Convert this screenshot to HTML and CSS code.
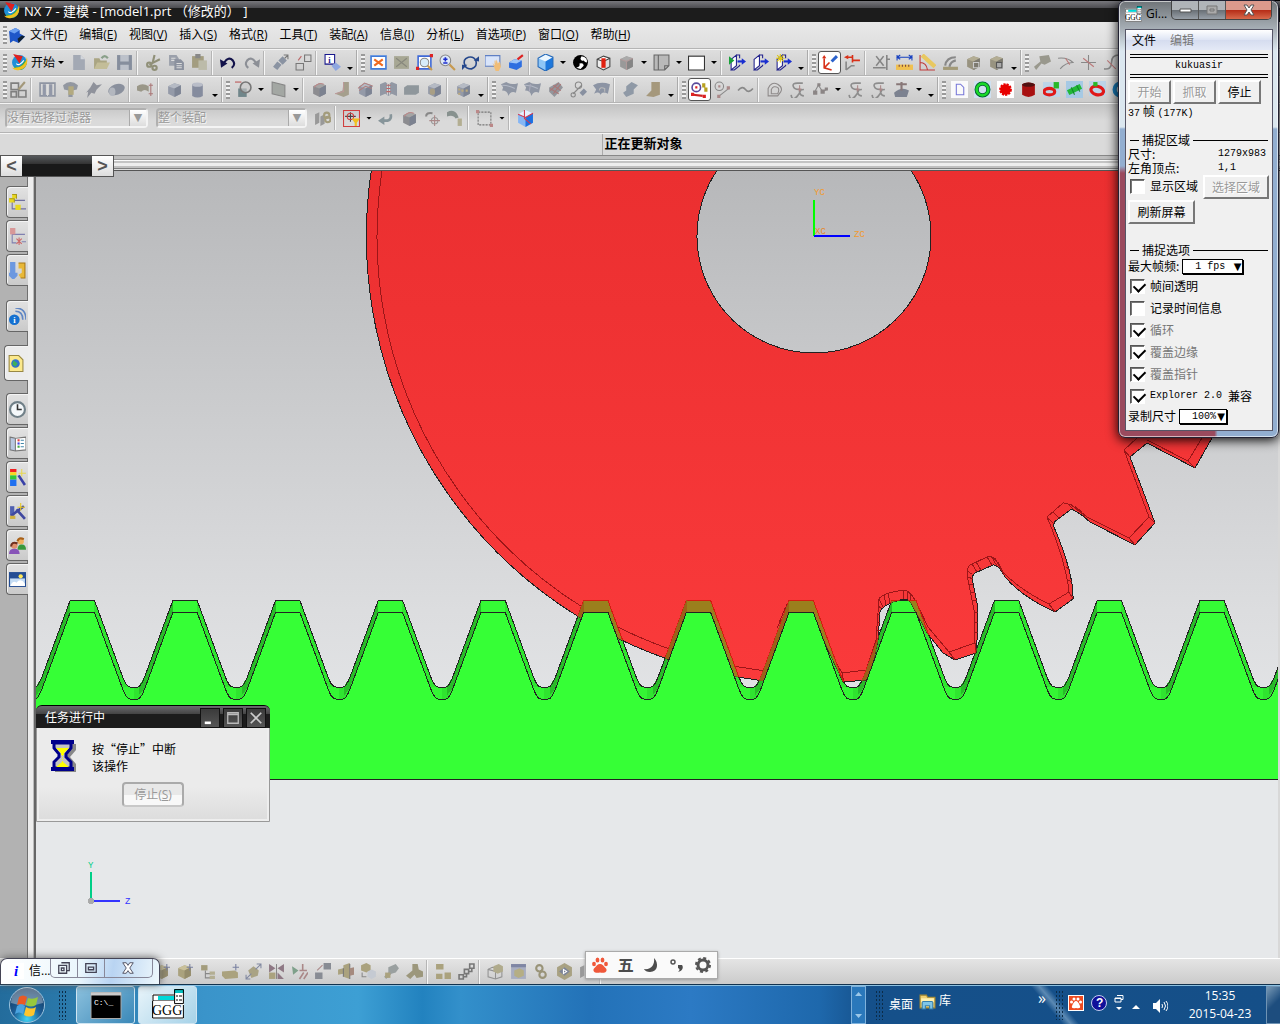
FILE: index.html
```html
<!DOCTYPE html>
<html lang="zh-CN">
<head>
    <meta charset="UTF-8">
    <meta name="viewport" content="width=device-width, initial-scale=1.0">
    <title>NX 7 - 建模</title>
    <link rel="stylesheet" href="styles.css">
</head>
<body>
    <header class="titlebar"><svg class="icon" data-icon="nx"></svg><h1>NX 7 - 建模 - [model1.prt （修改的） ]</h1></header>
    <nav class="menubar">
        <span class="grip"></span>
        <svg class="icon menu-icon" data-icon="part"></svg>
        <button>文件(<u>F</u>)</button>
        <button>编辑(<u>E</u>)</button>
        <button>视图(<u>V</u>)</button>
        <button>插入(<u>S</u>)</button>
        <button>格式(<u>R</u>)</button>
        <button>工具(<u>T</u>)</button>
        <button>装配(<u>A</u>)</button>
        <button>信息(<u>I</u>)</button>
        <button>分析(<u>L</u>)</button>
        <button>首选项(<u>P</u>)</button>
        <button>窗口(<u>O</u>)</button>
        <button>帮助(<u>H</u>)</button>
    </nav>
    <div class="toolbar">
        <span class="grip"></span>
        <button class="start-menu"><svg class="icon" data-icon="nx"></svg>开始</button>
        <div class="tools" data-items="v new open save | cut copy paste | undo redo | link swap | info V :: fit fitoff zoomwin zoom rotate pan persp | cube v contrast cubered cubegray v sheet v blank v | clip clip2 clipnew V :: *wcs csys | dimx ruler angle edge boxes boxes2 V :: hammer curve cross spline"></div>
    </div>
    <div class="toolbar">
        <span class="grip"></span>
        <div class="tools" data-items="sketch | extrude revolve sweep tube | offset | block cylinder V :: boolean v plane v | shell draft chamfer thread slab hole | pattern V :: surf surf2 mesh nodes blend | fold boot V :: *constrain arc wave | offcurve project points v spring spring stamp v V :: page ring gear drum gearpair shaft redring bluering"></div>
    </div>
    <div class="toolbar selection">
        <span class="combo filter"><select disabled aria-label="过滤器"><option>没有选择过滤器</option></select></span>
        <span class="combo scope"><select disabled aria-label="范围"><option>整个装配</option></select></span>
        <div class="tools" data-items="chain | snap v back shell target hook | marquee v | cubeline"></div>
    </div>
    <div class="status"><span class="cue"></span><strong class="message">正在更新对象</strong></div>
    <div class="strip">
        <div class="tab-scroll"><button aria-label="向左">&lt;</button><span></span><button aria-label="向右">&gt;</button></div>
    </div>

    <main class="work">
        <aside class="resource">
            <button aria-label="装配导航器"><svg class="icon" data-icon="tree"></svg></button>
            <button aria-label="约束导航器"><svg class="icon" data-icon="tree2"></svg></button>
            <button aria-label="重用库"><svg class="icon" data-icon="bolts"></svg></button>
            <button class="apart" aria-label="信息"><svg class="icon" data-icon="signal"></svg></button>
            <button class="apart current" aria-label="浏览器"><svg class="icon" data-icon="web"></svg></button>
            <button class="apart" aria-label="历史记录"><svg class="icon" data-icon="clock"></svg></button>
            <button aria-label="系统材料"><svg class="icon" data-icon="book"></svg></button>
            <button aria-label="可视化"><svg class="icon" data-icon="rainbow"></svg></button>
            <button aria-label="加工向导"><svg class="icon" data-icon="wand"></svg></button>
            <button aria-label="角色"><svg class="icon" data-icon="people"></svg></button>
            <button aria-label="系统场景"><svg class="icon" data-icon="scene"></svg></button>
        </aside>
        <section class="canvas">
            <svg class="model" viewBox="36 171 1242 787" preserveAspectRatio="xMinYMin slice">
                <defs>
                    <linearGradient id="red" gradientUnits="userSpaceOnUse" x1="0" y1="171" x2="0" y2="683">
                        <stop offset="0" stop-color="#eb2f30"/><stop offset="1" stop-color="#fa3a3b"/>
                    </linearGradient>
                    <linearGradient id="valley">
                        <stop offset="0" stop-color="#34f634"/><stop offset=".6" stop-color="#34f634"/><stop offset="1" stop-color="#1f991f"/>
                    </linearGradient>
                    <path id="gear-shape" clip-rule="evenodd" d="M373 160A447 447 0 0 0 732 676L763 681 790 650 820 632 843 682 867 680 873 663 878 640 880 612Q881 607 893 602L904 599Q910 599 913 607L922 623 927 633 943 653 955 660 976 653 977 640 977 603 973 583Q971 576 975 573L993 565Q998 564 1005 577 1022 597 1055 612L1073 599Q1074 574 1054 527 1053 522 1057 520L1070 510Q1074 508 1090 522L1135 545 1155 523 1140 483 1130 457 1147 443 1195 468 1212 438A447 447 0 0 0 1254 160H903A117 117 0 1 1 725 160Z"/>
                    <clipPath id="gear-clip"><use href="#gear-shape"/></clipPath>
                </defs>
                <g id="rack-back"></g>
                <use href="#gear-shape" fill="url(#red)" stroke="#222"/>
                <g class="gear-lines">
                    <path d="M382 171A437 437 0 0 0 733 666L765 671"/>
                    <path d="M812 605 829 650 842 673 866 670 876 640 879 599Q882 593 905 590 912 592 919 608L928 627 949 652 975 643 974 610 968 580Q966 567 970 565L989 556Q995 556 1003 572 1020 590 1049 604L1069 592Q1066 562 1047 517L1063 503Q1070 502 1087 517L1129 538 1149 517 1124 450 1137 438"/>
                    <path d="M1147 440 1188 461 1202 438M842 673 844 682M866 670 867 680M949 652 955 660M975 643 976 653M1049 604 1055 612M1069 592 1073 599M1129 538 1135 545M1149 517 1155 523M1188 461 1195 468M1124 450 1130 457M1047 517 1054 524M1053 512 1060 519M968 577 973 579M972 564 977 572M976 562 981 570M987 557 992 565M991 556 997 566M995 558 1001 570M998 562 1004 575M879 599 883 607M884 594 886 605M888 593 890 603M903 590 904 599M907 591 907 599M911 593 910 601M915 600 913 606M918 607 916 612M1067 503 1074 510M1071 504 1078 511M1075 506 1082 514M1079 509 1086 518M967 571 972 574M969 584 973 584M971 592 975 592M973 600 977 600M974 612 978 612M974 622 978 622M974 632 978 632M878 606 881 608M877 614 880 614M877 622 880 622M877 630 880 630M1066 567 1070 570M1068 580 1072 582M787 604 778 634M785 608 782 616M783 614 779 622M781 620 777 628"/>
                </g>
                <g id="rack-over" clip-path="url(#gear-clip)"></g>
                <path id="rack-front"/>
                <path d="M36 779.5H1278" stroke="#222"/>
                <g class="axis">
                    <path d="M814 236V200" stroke="#0f0"/><path d="M814 236H850" stroke="#00f"/>
                    <text x="814" y="195" fill="#f29a2e">YC</text><text x="854" y="237" fill="#f29a2e">ZC</text><text x="815" y="234" fill="#e5892c">XC</text>
                    <path d="M91 900V872" stroke="#00cf87"/><path d="M91 901H120" stroke="#3434ff"/><circle cx="91" cy="901" r="3" fill="#aaa"/>
                    <text x="88" y="868" fill="#00cf87">Y</text><text x="125" y="904" fill="#3434ff">Z</text>
                </g>
            </svg>
            <section class="task-dialog">
                <header><h2>任务进行中</h2><button aria-label="最小化"><svg viewBox="0 0 16 16"><path d="M2 12h7v3H2z" fill="#fff"/></svg></button><button aria-label="最大化"><svg viewBox="0 0 16 16"><path d="M2 2h12v12H2zM2 4h12" fill="none" stroke="#bbb" stroke-width="1.500"/></svg></button><button aria-label="关闭"><svg viewBox="0 0 16 16"><path d="M2 2l12 12M14 2L2 14" stroke="#ccc" stroke-width="2"/></svg></button></header>
                <div class="task-body">
                    <svg class="hourglass" viewBox="0 0 26 32"><path d="M4 4h21v6l-6 7 6 7v8H4v-4h2l6-11-6-7z" fill="#888"/><path d="M3 3h17v5l-5 6v3l5 5v6H3v-6l5-5v-3L3 8z" fill="#c4c4c4" stroke="#00008b" stroke-width="3"/><path d="M0 0h23v4H0zM0 27h23v4H0z" fill="#00008b"/><path d="M5 8h13l-5 5v2h-3v-2zM5 27l6-5h1l6 5z" fill="#ff0"/><path d="M11.500 15v8" stroke="#ff0" stroke-dasharray="1 1"/></svg>
                    <p>按“停止”中断<br>该操作</p>
                </div>
                <button class="stop" disabled>停止(<u>S</u>)</button>
            </section>
        </section>
    </main>

    <div class="toolbar assembly">
        <div class="tools" data-items="add addcomp addtree addslab move mirror constraints arrange assy replace wrench brick | parts steps | cubes window links diamond chain | block"></div>
    </div>

    <section class="info-window">
        <span class="info-mark">i</span><span class="info-title">信...</span>
        <div class="info-buttons">
            <button aria-label="还原"><svg viewBox="0 0 16 16"><path d="M5 2h9v9h-3M2 5h9v9H2zM5 8h3v3H5z" fill="none" stroke="#445" stroke-width="1.500"/></svg></button>
            <button aria-label="最大化"><svg viewBox="0 0 16 16"><path d="M2 3h12v10H2zM5 7h6v3H5z" fill="none" stroke="#445" stroke-width="1.500"/></svg></button>
            <button class="wide" aria-label="关闭"><svg viewBox="0 0 16 16"><path d="M2 2h4l2 3 2-3h4l-4 6 4 6h-4l-2-3-2 3H2l4-6z" fill="#fff" stroke="#445"/></svg></button>
        </div>
    </section>

    <section class="ime">
        <svg viewBox="0 0 16 16"><g fill="#f0583a"><ellipse cx="2" cy="7" rx="1.900" ry="2.300"/><ellipse cx="5.500" cy="3" rx="1.900" ry="2.500"/><ellipse cx="10.500" cy="3" rx="1.900" ry="2.500"/><ellipse cx="14" cy="7" rx="1.900" ry="2.300"/><path d="M8 7c2.500 0 3.500 2 6 4.500 2 3-1.500 5-6 4-4.500 1-8-1-6-4 2.500-2.500 3.500-4.500 6-4.500z"/></g></svg>
        <b>五</b>
        <svg viewBox="0 0 16 16"><path d="M11 1c5 5 4 14-4 14-3 0-5-1-6-3 7 1 11-4 10-11z" fill="#4c4c4c"/></svg>
        <svg viewBox="0 0 16 16"><circle cx="4" cy="5" r="2" fill="none" stroke="#555" stroke-width="1.500"/><path d="M9 8h4c2 3 0 6-4 7 2-2 2-3 0-4z" fill="#4c4c4c"/></svg>
        <svg viewBox="0 0 16 16"><circle cx="8" cy="8" r="5" fill="none" stroke="#555" stroke-width="3"/><circle cx="8" cy="8" r="7" fill="none" stroke="#555" stroke-width="2" stroke-dasharray="3 2.500"/></svg>
    </section>

    <section class="gif-window">
        <header>
            <svg class="gif-logo" data-icon="gif"></svg><h2>Gi...</h2>
            <div class="win-buttons"><button aria-label="最小化"><svg viewBox="0 0 14 14"><path d="M2 6h11v3H2z" fill="#fff" stroke="#555"/></svg></button><button aria-label="最大化"><svg viewBox="0 0 14 14"><path d="M2 3h10v8H2zM5 6h4v2H5z" fill="#aaa" stroke="#777"/></svg></button><button class="close" aria-label="关闭"><svg viewBox="0 0 14 14"><path d="M2 2h3l2 3 2-3h3L9 7l3 5H9L7 9l-2 3H2l3-5z" fill="#fff" stroke="#555"/></svg></button></div>
        </header>
        <div class="gif-client">
            <nav><button>文件</button><button disabled>编辑</button></nav>
            <div class="gif-name mono">kukuasir</div>
            <div class="gif-buttons"><button disabled>开始</button><button disabled>抓取</button><button>停止</button></div>
            <p class="frames"><span class="mono">37</span> 帧 <span class="mono">(177K)</span></p>
            <h3>捕捉区域</h3>
            <dl>
                <dt>尺寸:</dt><dd class="mono">1279x983</dd>
                <dt>左角顶点:</dt><dd class="mono">1,1</dd>
            </dl>
            <div class="area"><label class="check"><input type="checkbox">显示区域</label><button disabled>选择区域</button></div>
            <button class="refresh">刷新屏幕</button>
            <h3>捕捉选项</h3>
            <label class="pick">最大帧频: <span class="drop rate"><select><option>1 fps</option></select></span></label>
            <label class="check"><input type="checkbox" checked>帧间透明</label>
            <label class="check"><input type="checkbox">记录时间信息</label>
            <label class="check off"><input type="checkbox" checked disabled>循环</label>
            <label class="check off"><input type="checkbox" checked disabled>覆盖边缘</label>
            <label class="check off"><input type="checkbox" checked disabled>覆盖指针</label>
            <label class="check"><input type="checkbox" checked><span class="mono">Explorer 2.0&nbsp;</span>兼容</label>
            <label class="pick">录制尺寸<span class="drop size"><select><option>100%</option></select></span></label>
        </div>
    </section>

    <footer class="taskbar">
        <button class="orb" aria-label="开始"><svg viewBox="0 0 38 38">
            <defs><radialGradient id="orb" cx=".5" cy=".9" r=".8"><stop offset="0" stop-color="#3fd4f4"/><stop offset=".5" stop-color="#1d5f98"/><stop offset="1" stop-color="#123a63"/></radialGradient></defs>
            <circle cx="19" cy="19" r="17.500" fill="url(#orb)" stroke="#9cc4de"/><path d="M3 17a16 16 0 0 1 32 0q-16 5-32 0z" fill="#fff" opacity=".35"/>
            <path d="M11 11q4-3 8 0l-2 8q-4-2-8 0z" fill="#ea5a24"/><path d="M20 12q5 2 10-1l-2 8q-5 3-10 0z" fill="#97c83d"/><path d="M9 20q4-3 8 0l-2 8q-4-3-8 0z" fill="#4aa3e0"/><path d="M18 21q5 3 10 0l-2 8q-5 3-10 0z" fill="#fcc52c"/>
        </svg></button>
        <span class="dots"></span>
        <button class="task" aria-label="命令提示符"><svg viewBox="0 0 32 28"><path d="M1 1h30v26H1z" fill="#000" stroke="#aaa"/><path d="M1 1h30v3H1z" fill="#ccc"/><text x="4" y="13">C:\_</text></svg></button>
        <button class="task active" aria-label="GifGifGif"><svg data-icon="gif"></svg></button>
        <span class="wall"></span>
        <span class="scroller"><i class="up"></i><i class="down"></i></span>
        <span class="dots"></span>
        <button class="desk">桌面</button>
        <button class="lib"><svg viewBox="0 0 16 16"><path d="M1 2h6l1 2h7v10H1z" fill="#f0d070" stroke="#a88a30"/><path d="M2 5h12v4H2z" fill="#fff1b0"/><path d="M3 15V9q0-1 1-1h8q1 0 1 1v6h-3v-3H6v3z" fill="#7fc6e8" stroke="#357fae"/></svg>库</button>
        <span class="more">»</span>
        <span class="dots"></span>
        <div class="tray">
            <svg viewBox="0 0 16 16"><path d="M0 0h16v16H0z" fill="#fff"/><path d="M1 1h14v14H1z" fill="#ee4c22"/><g fill="#fff"><circle cx="3.500" cy="7" r="1.500"/><circle cx="6" cy="4" r="1.500"/><circle cx="10" cy="4" r="1.500"/><circle cx="12.500" cy="7" r="1.500"/><path d="M8 6q2 0 4 5 1 3-4 2-5 1-4-2 2-5 4-5z"/></g></svg>
            <svg viewBox="0 0 16 16"><circle cx="8" cy="8" r="7.500" fill="#10109a" stroke="#c5cdf0"/><text x="5" y="12" fill="#fff">?</text></svg>
            <svg class="thin" viewBox="0 0 10 18"><path d="M3 1.500h6v4H7M1 4h6v4H1zM1 4.500h6" fill="none" stroke="#fff"/><path d="M2 13h6l-3 3z" fill="#fff"/></svg>
            <svg class="thin low" viewBox="0 0 10 18"><path d="M1 12h8l-4-4z" fill="#fff"/></svg>
            <svg class="low" viewBox="0 0 16 16"><path d="M1 5h3l4-4v14l-4-4H1z" fill="#fff"/><path d="M10 6q1 2 0 4M12 4q3 4 0 8M14 3q4 5 0 10" fill="none" stroke="#fff"/></svg>
        </div>
        <time>15:35<br>2015-04-23</time>
        <button class="show-desktop" aria-label="显示桌面"></button>
    </footer>
    <script src="script.js"></script>
</body>
</html>
```
FILE: styles.css
```css
*{
    box-sizing: border-box;
    margin: 0;
    padding: 0;
}
body{
    display: flex;
    flex-direction: column;
    position: relative;
    min-height: 100vh;
    overflow: hidden;
    background: #d8d8d8;
    color: #000;
    font: 12px/16px "Open Sans", "Noto Sans CJK SC", sans-serif;
}
button, select, input{
    font: inherit;
    color: inherit;
    border: 0;
    background: none;
}
svg{
    display: block;
    flex: none;
}
.icon{
    width: 17px;
    height: 17px;
}

/* title and menu */
.titlebar{
    display: flex;
    align-items: center;
    gap: 4px;
    height: 22px;
    padding: 0 0 2px 3px;
    border-top: 1px solid #000;
    background: linear-gradient(#77777c, #4c4c50 7px, #1c1c1c 7px);
    color: #fff;
}
.titlebar h1{
    font-size: 13px;
    font-weight: normal;
}
.menubar{
    display: flex;
    align-items: center;
    gap: 12px;
    height: 27px;
    padding-left: 3px;
    background: linear-gradient(#e9e9e9, #dedede);
    border-bottom: 1px solid #b4b4b4;
}
.menu-icon{
    margin: 0 -7px 0 -11px;
}
.grip{
    flex: none;
    width: 4px;
    height: 18px;
    background: repeating-linear-gradient(#999 0 2px, #f2f2f2 2px 4px);
}

/* toolbars */
.toolbar{
    display: flex;
    align-items: center;
    height: 27px;
    padding-left: 3px;
    background: linear-gradient(#dedede, #cbcbcb);
    border-top: 1px solid #f4f4f4;
    border-bottom: 1px solid #b4b4b4;
    overflow: hidden;
}
.start-menu{
    display: flex;
    align-items: center;
    gap: 3px;
    margin-left: 4px;
    white-space: nowrap;
}
.tools{
    display: flex;
    align-items: center;
    height: 100%;
}
.tool{
    display: flex;
    align-items: center;
    justify-content: center;
    width: 23px;
    height: 23px;
    flex: none;
}
.pressed{
    border: 1px solid #555;
    border-radius: 3px;
    background: #fff;
}
.arrow{
    flex: none;
    width: 12px;
    height: 3px;
    background: #000;
    clip-path: polygon(25% 0, 75% 0, 50% 100%);
}
.arrow.low{
    align-self: flex-end;
    margin-bottom: 5px;
}
.sep{
    flex: none;
    width: 6px;
    height: 24px;
    border-left: 1px solid #b5b5b5;
    background: linear-gradient(#f6f6f6, #f6f6f6) 0 0 / 1px 100% no-repeat;
}
.group-end{
    flex: none;
    width: 5px;
    height: 100%;
    border-left: 1px solid #aaa;
    box-shadow: inset 1px 0 #f4f4f4;
}
.tools .grip{
    margin-right: 2px;
}
.selection{
    height: 30px;
    padding-left: 5px;
    background: linear-gradient(#c2c2c2, #dadada 60%);
}
.combo{
    position: relative;
    margin-right: 8px;
    border: 2px solid #b0b0b0;
    border-right-color: #f4f4f4;
    border-bottom-color: #f4f4f4;
    border-radius: 4px;
}
.combo select{
    display: block;
    width: 100%;
    height: 16px;
    line-height: 16px;
    appearance: none;
    color: #999;
    text-shadow: 1px 1px #f4f4f4;
    opacity: 1;
}
.combo::after{
    content: "▼";
    position: absolute;
    right: 0;
    top: 0;
    width: 16px;
    height: 16px;
    border-left: 1px solid #aaa;
    background: linear-gradient(#fff, #ddd);
    color: #999;
    font: 11px/16px "DejaVu Sans", sans-serif;
    text-align: center;
}
.filter{
    width: 143px;
}
.scope{
    width: 151px;
    margin-right: 4px;
}
.status{
    display: grid;
    grid-template-columns: 47% 1fr;
    align-items: center;
    height: 22px;
    border-top: 1px solid #f6f6f6;
    background: #dadada;
}
.message{
    padding: 0 0 2px 2px;
    border-left: 1px solid #aaa;
    font-size: 13px;
    line-height: 19px;
}
.strip{
    position: relative;
    height: 16px;
    background: linear-gradient(#888 1px, #bebebe 1px 4px, #999 4px 5px, #fafafa 5px 6px, #c4c4c4 6px 8px, #eee 8px 11px, #c0c0c0 11px 13px, #808080 13px 14px, #ddd 14px 15px, #555 15px);
}
.tab-scroll{
    position: absolute;
    z-index: 1;
    left: 0;
    top: 0;
    display: flex;
    width: 114px;
    height: 22px;
    border: 1px solid #555;
    background: linear-gradient(#55585b, #333 8px, #191919 8px);
}
.tab-scroll button{
    width: 21px;
    background: linear-gradient(#fff, #ddd);
    color: #555;
    font: bold 18px/18px "Liberation Sans", sans-serif;
}
.tab-scroll span{
    flex: 1;
}

/* working area */
.work{
    display: flex;
    flex: 1;
    min-height: 787px;
}
.resource{
    display: flex;
    flex-direction: column;
    align-items: flex-end;
    gap: 2px;
    width: 36px;
    padding: 15px 8px 0 0;
    background: linear-gradient(90deg, #b2b2b2 27px, #707070 27px 28px, #ededed 28px 33px, #bbb 33px 34px, #666 34px);
}
.resource button{
    width: 22px;
    height: 32px;
    padding-left: 2px;
    border: 1px solid #666;
    border-right: 0;
    border-radius: 4px 0 0 4px;
    background: linear-gradient(#e2e2e2, #cacaca);
    box-shadow: inset 1px 1px #f4f4f4;
}
.resource .apart{
    margin-top: 12px;
}
.resource .current{
    width: 24px;
    height: 36px;
    margin-top: 11px;
    background: #ececec;
}
.resource .current + .apart{
    margin-top: 10px;
}
.canvas{
    position: relative;
    flex: 1;
    min-width: 0;
    margin-right: 2px;
    overflow: hidden;
    background: linear-gradient(#b7b8ba, #dcdddf 440px, #e6e8ea 600px);
}
.model{
    width: 100%;
    height: 100%;
    shape-rendering: crispEdges;
}
.gear-lines{
    fill: none;
    stroke: #9c1618;
}
.axis path{
    stroke-width: 2;
}
.axis text{
    font: 9px "Liberation Mono", monospace;
}

/* task dialog */
.task-dialog{
    position: absolute;
    left: 0;
    top: 534px;
    width: 234px;
    border: 1px solid #999;
    border-radius: 6px 6px 0 0;
    background: linear-gradient(#ebebeb 70%, #dcdcdc);
    box-shadow: inset 0 0 0 2px #eee;
}
.task-dialog header{
    display: flex;
    align-items: center;
    gap: 3px;
    height: 23px;
    margin: -1px -1px 0;
    padding: 1px 4px 0 9px;
    border-radius: 6px 6px 0 0;
    border-top: 1px solid #000;
    background: linear-gradient(#6a6a6e, #444 8px, #1c1c1c 8px);
    color: #fff;
}
.task-dialog h2{
    flex: 1;
    font-size: 12px;
    font-weight: normal;
}
.task-dialog header button{
    width: 20px;
    padding: 2px;
    border: 1px solid #111;
    background: linear-gradient(#3a3a3a, #555);
}
.task-dialog header svg{
    width: 14px;
    height: 14px;
}
.task-body{
    display: flex;
    gap: 15px;
    padding: 12px 14px 0;
    font-family: "Noto Sans CJK SC", sans-serif;
    line-height: 17px;
}
.hourglass{
    width: 26px;
    height: 32px;
}
.stop{
    display: block;
    width: 62px;
    height: 25px;
    margin: 8px auto 14px;
    border: 2px solid #aaa;
    border-bottom-color: #c8c8c8;
    border-radius: 4px;
    background: linear-gradient(#e8e8e8 50%, #f8f8f8 50%);
    color: #999;
}

/* bottom bars */
.assembly{
    height: 26px;
    padding-left: 150px;
    border-top: 1px solid #fff;
    background: linear-gradient(#e4e4e4, #cbcbcb);
    border-bottom: 0;
}
.info-window{
    position: absolute;
    left: 0;
    bottom: 41px;
    display: flex;
    align-items: flex-start;
    width: 160px;
    height: 26px;
    padding-left: 7px;
    border: 1px solid #445;
    border-bottom: 0;
    border-radius: 7px 7px 0 0;
    background: linear-gradient(100deg, #fff, #eaf6fc 50%, #b9d4f2 70%, #eef8fc);
    box-shadow: 0 0 8px #555;
}
.info-mark{
    width: 16px;
    height: 16px;
    margin: 4px 5px 0 0;
    background: #fff;
    color: #00f;
    font: italic bold 15px/16px "Liberation Serif", serif;
    text-align: center;
}
.info-title{
    padding-top: 4px;
}
.info-buttons{
    display: flex;
    height: 19px;
    border: 1px solid #889;
    border-top: 0;
    border-radius: 0 0 5px 5px;
}
.info-buttons button{
    width: 27px;
    padding: 1px 6px;
    border-right: 1px solid #889;
}
.info-buttons .wide{
    width: 47px;
    padding: 1px 16px;
    border: 0;
}
.info-buttons svg{
    width: 14px;
    height: 14px;
}
.ime{
    position: absolute;
    left: 585px;
    bottom: 46px;
    display: flex;
    align-items: center;
    justify-content: space-between;
    width: 133px;
    height: 28px;
    padding: 0 6px;
    border: 1px solid #aaa;
    background: #fafafa;
    box-shadow: 0 1px 3px #999;
}
.ime svg{
    width: 16px;
    height: 16px;
}
.ime b{
    color: #4c4c4c;
    font-size: 16px;
}

/* recorder window */
.gif-window{
    position: absolute;
    right: 1px;
    top: 0;
    width: 161px;
    height: 438px;
    padding: 0 6px 6px;
    border: 1px solid #223;
    border-radius: 7px;
    background: linear-gradient(#6f7478, #a7afb6 28px, #dbe7ef 50px 126px, transparent 128px), linear-gradient(90deg, transparent 60%, #92aed0 62%), linear-gradient(#92aed0 165px, #9a4a5e 172px);
    box-shadow: inset 0 0 0 1px #ffffff99, 0 2px 12px #000;
}
.gif-window header{
    display: flex;
    height: 28px;
}
.gif-logo{
    width: 17px;
    height: 17px;
    margin: 5px 4px 0 0;
}
.gif-window h2{
    width: 22px;
    padding-top: 5px;
    font-size: 12px;
    font-weight: normal;
    white-space: nowrap;
}
.win-buttons{
    display: flex;
    height: 19px;
    margin-left: 3px;
    border: 1px solid #444;
    border-top: 0;
    border-radius: 0 0 5px 5px;
    background: linear-gradient(#b0b4b8 50%, #686e74 50%, #98a0a8);
    overflow: hidden;
}
.win-buttons button{
    width: 27px;
    padding: 2px 6px;
    border-right: 1px solid #555;
}
.win-buttons .close{
    width: 47px;
    padding: 2px 16px;
    border: 0;
    background: linear-gradient(#dc9a8c 50%, #b52b16 50%, #d86a4c);
}
.win-buttons svg{
    width: 14px;
    height: 14px;
}
.gif-client{
    display: flex;
    flex-direction: column;
    align-items: flex-start;
    width: 148px;
    height: 402px;
    padding: 0 3px 0 2px;
    border: 1px solid #556;
    background: #f0f0f0;
    font: 12px/14px "Noto Sans CJK SC", sans-serif;
}
.gif-client > *{
    flex: none;
}
.gif-client nav{
    display: flex;
    gap: 14px;
    align-self: stretch;
    height: 20px;
    margin: 0 -3px 4px -2px;
    padding-left: 6px;
    background: linear-gradient(#fff, #dde4f4 50%, #d5dcef 50%, #e4e9f6);
}
.gif-client nav button:disabled{
    color: #777;
}
.mono{
    font-family: "Liberation Mono", "Noto Sans CJK SC", monospace;
    font-size: 10px;
}
.gif-name{
    align-self: stretch;
    height: 24px;
    margin: 0 1px 2px 2px;
    border: solid #000;
    border-width: 4px 0;
    border-style: double;
    line-height: 16px;
    text-align: center;
}
.gif-buttons{
    display: flex;
    gap: 2px;
}
.gif-client > button, .gif-buttons button, .area button{
    height: 24px;
    border: 2px solid #fff;
    border-right-color: #777;
    border-bottom-color: #777;
    background: #f0f0f0;
    white-space: nowrap;
}
.gif-buttons button{
    width: 43px;
}
.gif-client > button:disabled, .gif-buttons button:disabled, .area button:disabled{
    color: #999;
    text-shadow: 1px 1px #fff;
}
.frames{
    height: 14px;
    margin-bottom: 15px;
}
.gif-client h3{
    display: flex;
    align-items: center;
    align-self: stretch;
    gap: 3px;
    margin: 0 1px 0 2px;
    font-size: 12px;
    font-weight: normal;
    line-height: 14px;
}
.gif-client h3::before{
    content: "";
    width: 9px;
    border-top: 1px solid #000;
}
.gif-client h3::after{
    content: "";
    flex: 1;
    border-top: 1px solid #000;
}
.gif-client dl{
    display: grid;
    grid-template-columns: 90px 1fr;
    grid-auto-rows: 14px;
    align-items: center;
}
.area{
    display: flex;
    justify-content: space-between;
    align-self: stretch;
}
.area button{
    width: 66px;
}
.check{
    display: flex;
    align-items: center;
    height: 22px;
    padding-left: 2px;
    white-space: nowrap;
}
.check.off{
    color: #777;
}
.check input{
    position: relative;
    width: 15px;
    height: 15px;
    margin-right: 5px;
    appearance: none;
    border: 1px solid #555;
    border-right-color: #fff;
    border-bottom-color: #fff;
    background: #fff;
    box-shadow: inset 1px 1px #777;
}
.check input:checked::after{
    content: "";
    position: absolute;
    left: 3px;
    top: 2px;
    width: 9px;
    height: 6px;
    border: solid #000;
    border-width: 0 0 2px 2px;
    transform: rotate(-45deg);
}
.refresh{
    width: 67px;
    margin: 1px 0 19px;
}
.pick{
    display: flex;
    align-items: center;
    gap: 3px;
    height: 18px;
}
.drop{
    position: relative;
    border: 1px solid #000;
    background: #fff;
    box-shadow: 1px 1px #000;
}
.drop select{
    display: block;
    width: 100%;
    height: 13px;
    padding-left: 12px;
    appearance: none;
    font: 10px/13px "Liberation Mono", monospace;
}
.drop::after{
    content: "▼";
    position: absolute;
    right: 1px;
    top: 0;
    font: 10px/13px "DejaVu Sans", sans-serif;
}
.rate{
    width: 61px;
}
.size{
    width: 48px;
}

/* taskbar */
.taskbar{
    display: flex;
    align-items: center;
    height: 41px;
    padding-left: 8px;
    border-top: 1px solid #12324e;
    background: linear-gradient(50deg, transparent 44%, #7fa6c8aa 50%, transparent 56%) 1000px 0 / 110px 100% no-repeat, linear-gradient(90deg, #236c9c, #3a94ca 16%, #3d9fd4 28%, #2282bf 33%, #3390cb 36%, #2372b8 46%, #2c7ac4 54%, #1e68ac 64%, #15508a 68%, #154f88);
    box-shadow: inset 0 1px #8cc0e0;
    color: #fff;
}
.orb{
    width: 38px;
    height: 38px;
}
.dots{
    width: 9px;
    height: 30px;
    background: radial-gradient(#0c2c48 40%, transparent 50%) 0 0 / 3px 4px;
}
.orb + .dots{
    margin: 0 9px 0 12px;
}
.task{
    display: flex;
    align-items: center;
    justify-content: center;
    width: 59px;
    height: 38px;
    margin-right: 3px;
    border: 1px solid #cfe5f2;
    border-radius: 3px;
    background: linear-gradient(135deg, #8bc0dd, #3a88b8);
}
.task.active{
    background: linear-gradient(135deg, #e8f4fa, #a6d2e8);
}
.task svg{
    width: 32px;
    height: 29px;
}
.task.active svg{
    height: 32px;
}
.task text{
    fill: #fff;
    font: 8px "Liberation Mono", monospace;
}
svg .gif-text{
    fill: #000;
    font: 7px "Liberation Serif", serif;
}
svg .info-text{
    font: bold 8px "Liberation Serif", serif;
}
.wall{
    flex: 1;
}
.scroller{
    display: flex;
    flex-direction: column;
    justify-content: space-between;
    align-items: center;
    width: 15px;
    height: 38px;
    margin-right: 9px;
    padding: 5px 0;
    border: 1px solid #7fb2dc;
    background: #2a78bb;
}
.scroller i{
    width: 7px;
    height: 4px;
    background: #9cc8e8;
}
.up{
    clip-path: polygon(50% 0, 100% 100%, 0 100%);
}
.down{
    clip-path: polygon(0 0, 100% 0, 50% 100%);
}
.desk{
    margin: 0 6px 0 5px;
}
.lib{
    display: flex;
    align-items: center;
    gap: 3px;
    margin-bottom: 8px;
}
.lib svg{
    width: 17px;
    height: 17px;
}
.more{
    margin: 0 9px 14px 87px;
    font-size: 16px;
}
.tray{
    display: flex;
    align-items: center;
    gap: 7px;
    margin: 0 0 4px 4px;
}
.tray svg{
    width: 16px;
    height: 16px;
}
.tray text{
    font: bold 12px "Liberation Sans", sans-serif;
}
.tray .thin{
    width: 10px;
    height: 18px;
}
.tray .low{
    margin-top: 5px;
}
.tray .low:last-child{
    margin-left: 4px;
}
.taskbar time{
    width: 80px;
    margin: 0 6px 0 12px;
    line-height: 18px;
    text-align: center;
    white-space: nowrap;
}
.show-desktop{
    width: 14px;
    height: 38px;
    border: 1px solid #6f93b4;
    border-right: 0;
    background: linear-gradient(135deg, #7899b5, #1d4d7e 50%);
}
```
FILE: script.js
```js
// greyed shapes shared by several tools
const box = (top, left, right) => `<path d="M2 5l6-3 6 2v8l-6 3-6-3z" fill="${left}"/><path d="M2 5l6-3 6 2-6 3z" fill="${top}"/><path d="M8 7l6-3v8l-6 3z" fill="${right}"/>`;
const grayBox = box("#b5bac4", "#949aa8", "#7d8494");
const tanBox = box("#c9c09a", "#aaa27e", "#948c6c");
const line = (d, color, width = 1) => `<path d="${d}" fill="none" stroke="${color}" stroke-width="${width}"/>`;
const fill = (d, color) => `<path d="${d}" fill="${color}"/>`;
const ring = (color, size, width) => `<circle cx="8" cy="8" r="${size}" fill="none" stroke="${color}" stroke-width="${width}"/>`;
const plus = line("M13 1v6M10 4h6", "#7880a0");
const clipBox = fill("M2 5l5-4v10l-5 4z", "#fff") + line("M2 5l5-4v10l-5 4zM7 1h3v3M10 10v1l-5 4H2", "#22228c") + line("M8 7h6", "#1a2fd0", 2) + fill("M12 4l4 3-4 3z", "#1a2fd0");
const curl = line("M13 2H8Q3 2 4 5t5 3-1 6-6-1M14 8q-5 0-4 3t4 3", "#8d8d8d", 1.5) + line("M10 4v5", "#a88", 1) + fill("M8 7h4l-2 3z", "#a88");
const sheet = fill("M0 3l5-2q4 3 11 1l-2 9q-5-2-7 3-1-5-6-5l1-3z", "#8f96a4") + line("M1 4q6 0 12 3", "#b4bac6");

const icons = {
    nx: `<circle cx="8" cy="8" r="7" fill="#1f8fd8"/><path d="M3 11q5 4 10-5l2 2q-2 7-7 7-4 0-5-4z" fill="#35b04a"/><path d="M1 13Q13 14 15 3q2 10-7 12-5 1-7-2z" fill="#f0c020"/><path d="M2 0l9 2-3 7z" fill="#e02020"/><path d="M5 9q3 3 7-3" fill="none" stroke="#fff"/>`,
    part: fill("M1 4l6-3 4 2v3l5 3-6 6-5-2-3 2z", "#1e56c8") + fill("M1 4l6-3 4 2-5 3z", "#6ca0f0") + fill("M10 15l6-6-3-1-4 3z", "#123"),
    new: fill("M3 1h7l4 4v10H3z", "#a3a9b4") + fill("M10 1v4h4z", "#d3d6dc"),
    open: fill("M1 4h5l1 2h6v8H1z", "#aaa583") + fill("M4 8h12l-3 6H1z", "#c3bd98") + line("M8 4q3-4 6 0", "#8aa08a", 2),
    save: fill("M1 1h14v14H1z", "#868e9d") + fill("M4 1h8v6H4zM4 10h8v5H4z", "#bcc1ca"),
    cut: line("M9 1L7 9M14 5L4 10", "#909078", 2) + `<circle cx="4" cy="10" r="2" fill="none" stroke="#909078" stroke-width="2"/><circle cx="9" cy="13" r="2" fill="none" stroke="#909078" stroke-width="2"/>`,
    copy: fill("M1 1h7l2 3v7H1z", "#9ba0ab") + fill("M6 5h6l3 3v7H6z", "#8b919e") + line("M3 4h4M3 6h3M8 9h5M8 11h5M8 13h5", "#ddd"),
    paste: fill("M1 2h11v11H1z", "#a39d80") + fill("M4 0h5v4H4z", "#888") + fill("M7 6h8v9H7z", "#bcbba9"),
    undo: line("M4 8q4-6 8-2 3 4-1 7", "#12124a", 2) + fill("M0 5l1 8 6-4z", "#12124a"),
    redo: line("M12 8Q8 2 4 6q-3 4 1 7", "#8c8f96", 2) + fill("M16 5l-1 8-6-4z", "#8c8f96"),
    link: fill("M1 12l4-5 4 3-4 5zM6 6l4-4 4 4-4 4z", "#8a93a2") + line("M12 4l3-3M11 1h4v4", "#777"),
    swap: line("M1 9h7v6H1zM9 1h6v6H9z", "#777") + line("M3 6l3-4", "#b66"),
    info: fill("M1 0h9v9H1z", "#fff") + line("M1 .5h9v9H1z", "#16168c") + `<text class="info-text" x="4" y="8" fill="#16168c">i</text>` + fill("M7 11l4-3 5 4-5 4z", "#8fa8e0"),
    fit: fill("M1 1h14v13H1z", "#fff") + line("M1 2h14v12H1z", "#3f7ad8", 1.5) + line("M4 5l8 6M12 5l-8 6", "#ef6a20", 2),
    fitoff: fill("M1 2h14v12H1z", "#a7a794") + line("M3 4l10 8M13 4L3 12", "#87877c"),
    zoomwin: fill("M2 2h12v12H2z", "#fff") + line("M2 2h12v12H2z", "#3f6ad8", 1.5) + `<circle cx="8" cy="8" r="4" fill="#d8ecfa" stroke="#888"/>` + fill("M0 12h3v3H0zM13 0h3v3h-3z", "#d22") + line("M11 11l4 4", "#c79a50", 2),
    zoom: `<circle cx="6" cy="6" r="5" fill="#dde8f8" stroke="#888"/>` + line("M6 3v4M4 5h4M4 8.500h4", "#1a2acc", 1.5) + line("M10 10l5 5", "#c79a50", 2),
    rotate: line("M3 11Q0 5 6 3q5-1 7 3M13 6q2 6-4 8-5 0-6-3", "#26488c", 1.5) + fill("M11 6l5 1V2zM5 10H0v5z", "#26488c"),
    pan: fill("M0 1h13v10H0z", "#d8e4fa") + line("M0 1.500h14v10H0z", "#5f7fc4") + fill("M7 8l2 3V6h1v3l1-4 1 4 2-2 1 5-2 4h-3z", "#f0bd78"),
    persp: fill("M1 8l5-3 7 1v6l-5 3-7-2z", "#2e6ee0") + fill("M1 8l5-3 7 1-5 3z", "#9cc4f8") + line("M9 5l5-4", "#d22", 2),
    cube: fill("M1 4l7-4 7 3v9l-7 4-7-4z", "#8ec6f6") + fill("M1 4l7-4 7 3-7 4z", "#eaf6ff") + fill("M8 7l7-4v9l-7 4z", "#1e78dc") + line("M1 4l7-4 7 3v9l-7 4-7-4z", "#2468b8"),
    contrast: `<circle cx="8" cy="8" r="7" fill="#000"/>` + fill("M9 2q6 1 5 6-2 0-3-2-3 1-3-2zM4 13q4-1 3-4 4-1 4 2l-3 3z", "#fff"),
    cubered: box("#fff", "#eee", "#ddd") + line("M2 5l6-3 6 2v8l-6 3-6-3zM2 5l6 2 6-3", "#444") + fill("M6 4h4v9H6z", "#e02010"),
    cubegray: box("#aaa", "#999", "#858585") + line("M2 5l6 2v8M8 7l6-3", "#b09a9a"),
    sheet: fill("M1 1h14v10l-4 4H1z", "#b9b9b9") + line("M1 1h14v10l-4 4H1zM5 1v14M15 11h-4v4", "#666"),
    blank: fill("M0 1h16v14H0z", "#fff") + line("M.5 2h15v13H.5z", "#333"),
    clip: clipBox + fill("M0 2l5 4-5 4z", "#18a038"),
    clip2: clipBox,
    clipnew: clipBox + line("M5 0v8M1 4h8M2 1l6 6M8 1L2 7", "#e0c810"),
    wcs: line("M3 4v9l7 2M3 13l5-5", "#d83018", 1.5) + fill("M9 6l5-5 2 2-5 5z", "#2b62cc") + fill("M1 4l2-3 2 3z", "#d83018"),
    csys: line("M8 1v7M2 3h6M8 6h7", "#d83018", 1.5) + fill("M4 1v4L0 3z", "#d83018") + line("M2 7v8M2 15l5-4h3", "#888", 1.5),
    dimx: line("M3 2l7 9M10 2l-7 9M0 13h12M13 1v14M13 5h3", "#858585", 1.5),
    ruler: fill("M0 10h16v5H0z", "#f0c050") + line("M1 3h14M1 1v5M15 1v5M4 1L1 3l3 2M12 1l3 2-3 2", "#1640c0") + line("M3 10v2M6 10v2M9 10v2M12 10v2", "#744"),
    angle: line("M1 1v14h14M1 8q6 0 7 7", "#c03838") + line("M3 1l12 11", "#e8c860", 4),
    edge: fill("M1 12h14v3H1z", "#a39a78") + line("M3 11Q4 3 13 3M7 12q1-5 6-6", "#888", 2),
    boxes: box("#b3ad94", "#989380", "#7d7a70") + line("M8 8h5v5H8z", "#ccc"),
    boxes2: box("#b3ad94", "#989380", "#7d7a70") + fill("M8 8h6v6H8z", "#aaa") + line("M8 8h5v5H8z", "#555"),
    hammer: fill("M5 2l9-1 2 6-6 3-3-1-5 6-2-3 6-5z", "#99988d"),
    curve: line("M1 4q9-1 14 4Q8 8 3 14", "#888") + line("M8 4l4 6", "#b77"),
    cross: line("M8 1v14M1 8h14", "#888") + line("M3 4l10 8", "#b77"),
    spline: line("M1 14q7 1 7-6t7-7", "#888", 1.5) + line("M4 6l8 8", "#b77"),
    sketch: line("M1 2h7v6H1zM1 10h5v5H1zM8 9h7v6H8z", "#7f7f7f", 1.5) + line("M8 8l6-7", "#a3987a", 2),
    extrude: line("M1 2h14v12H1z", "#8f95a2", 1.5) + line("M5 3v11M11 3v11", "#9298a8", 3) + line("M8 3v11", "#ddd"),
    revolve: fill("M1 4q7-6 14 0l-1 4-4 1v6H6V9L2 8z", "#9297a0") + fill("M6 5h5v8H6z", "#b3aa80"),
    sweep: fill("M1 11l4-5 3-5 3 3 5-1-5 5-2 4-3-1-4 5 1-6z", "#8f929b"),
    tube: `<ellipse cx="8" cy="8" rx="8" ry="5" fill="#8a909d" transform="rotate(-20 8 8)"/><ellipse cx="4" cy="10" rx="3" ry="4" fill="#b3b7bf"/>`,
    offset: fill("M0 5q5-4 11 0v5q-4-3-7 0l-4-1z", "#9a9788") + line("M13 2v12M11 4h4M11 12h4", "#a77"),
    block: grayBox,
    cylinder: fill("M3 3h10v11q-5 3-10 0z", "#858c9e") + `<ellipse cx="8" cy="3.500" rx="5" ry="2" fill="#b9bdc8"/>`,
    boolean: fill("M3 7h8v8H3z", "#70868a") + `<circle cx="10" cy="6" r="5" fill="#c9c9c9" fill-opacity=".6" stroke="#777" stroke-width="1.500"/>` + line("M0 1h6", "#b55"),
    plane: fill("M2 1l12 3v11L2 12z", "#a3a7a3") + line("M2 1l12 3v11L2 12z", "#868686"),
    shell: box("#a5a5a5", "#8c8c90", "#7c8290") + line("M3 6q4-5 9-3", "#b88"),
    draft: fill("M9 1h5v12l-5 2-8-3 7-3z", "#a59f8d") + line("M9 1v9l-8 2", "#b99"),
    chamfer: grayBox + line("M1 7l6-5 8 3M2 9l6-4 6 2", "#b08080"),
    thread: fill("M0 3l5-2 3 2 3-2 5 2v11l-5-2-3 2-3-2-5 2z", "#9298a4") + line("M7 2v11M9 2v11", "#d4d4d4") + line("M6 4h4M6 7h4M6 10h4", "#b66"),
    slab: fill("M1 6l3-2h11v7l-3 2H1z", "#8f979c"),
    hole: grayBox + `<ellipse cx="6" cy="10" rx="2.500" ry="3" fill="#a99f85"/>`,
    pattern: grayBox + line("M4 7v2M4 11v2M7 8v2M11 8v2", "#bba97e", 2),
    surf: sheet,
    surf2: sheet + line("M6 3l-1 7", "#aab"),
    mesh: fill("M2 6l9-5 4 5-8 9-5-5z", "#93969c") + line("M3 7l8 5M6 4l7 5M6 12l7-9M3 9l8-7", "#a77"),
    nodes: line("M3 12l8-8", "#888") + `<circle cx="8" cy="4" r="3" fill="none" stroke="#888"/><circle cx="3" cy="13" r="2" fill="none" stroke="#888"/>` + fill("M9 11l4-4 3 3-4 4z", "#8890a0"),
    blend: fill("M0 4q7-4 16-1l-2 9q-5-3-7 1-1-4-6-1l2-4z", "#8c94a4") + line("M6 9q0-4 5-2v3", "#bbb"),
    fold: fill("M4 5l5-4 6 3-4 4v4l-7 3-3-4 3-2z", "#8f99a6"),
    boot: fill("M6 1h8v12l-6 2-7-1 5-5z", "#a5987c"),
    constrain: `<circle cx="5" cy="6" r="4" fill="none" stroke="#5a4a9a" stroke-width="1.500"/>` + line("M2 13l9 1", "#c22", 2) + line("M12 2v4M14 6v4", "#b8a020", 3) + fill("M4 5h2v2H4zM0 11h3v3H0zM11 13h3v3h-3z", "#d22"),
    arc: `<circle cx="5" cy="5" r="4" fill="none" stroke="#888"/>` + line("M5 14l9-7", "#888") + fill("M3 13h3v3H3zM12 5h3v3h-3zM4 4h2v2H4z", "#a88"),
    wave: line("M1 9q4-5 7-1t7-1", "#888", 1.5),
    offcurve: line("M2 14V7q3-7 9-4 5 3 3 7l-3 4zM5 12V8q2-4 6-2 2 2 0 6z", "#8e8a8a"),
    project: curl, spring: curl,
    points: line("M2 11l4-7 4 6 4-2", "#888") + fill("M1 9h4v4H1zM5 2h3v3H5zM8 8h4v4H8zM12 6h3v3h-3z", "#8b8585"),
    stamp: fill("M1 11q7-6 14-2l-2 6H2z", "#7c8290") + line("M8 1v8M3 3h10", "#877", 2),
    page: fill("M0 0h16v16H0z", "#fafafa") + line("M5 3h4l3 3v7H5z", "#7878d8"),
    ring: fill("M0 0h16v16H0z", "#cfe0f0") + ring("#053", 5.5, 4) + ring("#18d828", 5.5, 2.5),
    gear: fill("M0 0h16v16H0z", "#fff") + `<circle cx="8" cy="8" r="5" fill="#e80000"/><circle cx="8" cy="8" r="5" fill="none" stroke="#e80000" stroke-width="2" stroke-dasharray="2 1"/>`,
    drum: fill("M2 3q6-3 12 0v10q-6 4-12 0z", "#a81010") + `<ellipse cx="8" cy="3.500" rx="6" ry="2" fill="#501010"/>`,
    gearpair: fill("M0 1h16v14H0z", "#bcd4e8") + `<ellipse cx="6" cy="10" rx="5" ry="3" fill="none" stroke="#e01818" stroke-width="3"/>` + fill("M10 1h5v6h-5z", "#28b828"),
    shaft: fill("M0 0h16v16H0z", "#a6c9e4") + line("M2 11l12-6", "#22b838", 5) + line("M5 6l3 7M10 4l3 6", "#108828"),
    redring: fill("M0 0h16v14H0z", "#bcd4e8") + `<ellipse cx="8" cy="9" rx="6" ry="4" fill="none" stroke="#e01818" stroke-width="3" transform="rotate(15 8 8)"/>` + fill("M4 1h4v4H4z", "#28b828"),
    bluering: ring("#1878b4", 5.5, 4),
    chain: fill("M1 4l4-2v10l-4 2zM6 6l4-2v9l-4 2z", "#999") + `<circle cx="12" cy="5" r="2.500" fill="none" stroke="#a39c7c" stroke-width="2"/><circle cx="13" cy="9" r="2.500" fill="none" stroke="#a39c7c" stroke-width="2"/>`,
    snap: line("M.5.5h15v15H.5z", "#d04040") + line("M7 2v9M2 6h10", "#444") + `<circle cx="7" cy="6" r="3" fill="none" stroke="#d04040"/>` + fill("M8 8h8l-3 4v3h-2v-3z", "#f0c020"),
    back: line("M3 10h6q4-1 3-6", "#87959a", 2.5) + fill("M0 10l6-4v8z", "#87959a"),
    target: line("M2 6q0-4 6-3", "#888", 2) + `<circle cx="10" cy="10" r="3" fill="none" stroke="#999"/>` + line("M10 5v10M5 10h10", "#a88"),
    hook: fill("M0 2q8-4 11 5l-3 1Q6 4 0 6z", "#87918e") + fill("M10 8h4v7h-4z", "#b3ae92"),
    marquee: `<path d="M2 2h12v12H2z" fill="none" stroke="#777" stroke-dasharray="2 1"/>` + fill("M0 0h3v3H0zM13 13h3v3h-3z", "#b88"),
    cubeline: fill("M1 4l7-4 7 3v9l-7 4-7-4z", "#86b6f4") + fill("M1 4l7-4 7 3-7 4z", "#e4f0ff") + fill("M8 7l7-4v9l-7 4z", "#1e70e0") + line("M1 4l7 3 7-4M7 0v8l6 5", "#d03a50"),
    add: tanBox + plus, addcomp: tanBox + plus,
    addtree: fill("M2 2h6v5H2z", "#a39c7c") + line("M6 7v7h5M6 10h5", "#888") + fill("M10 8h5v3h-5zM10 12h5v3h-5z", "#b3ae92"),
    addslab: fill("M0 8l12-1 3 2v5l-12 1-3-3z", "#aaa27e") + plus,
    move: fill("M3 7l5-4 5 4-1 5-6 2z", "#a9a384") + line("M1 15l5-5M10 6l5-5M11 1h4v4M1 11v4h4", "#8088a0"),
    mirror: line("M8 1v14", "#888") + fill("M1 1l6 4-6 4zM15 1L9 5l6 4zM9 9l6 6H9z", "#8e7884") + fill("M1 9h6v6H1z", "#aaa27e"),
    constraints: fill("M1 3l6 4-5 4z", "#7ea08a") + line("M11 1v6M8 7h7M8 15l4-6M12 15l4-6", "#a88", 1.5),
    arrange: fill("M9 0h7v6H9zM1 9h7v6H1z", "#888c94") + line("M3 7l5-5", "#a88"),
    assy: fill("M1 6l5-1V2l6-2v15l-6-2v-3l-5 1z", "#aaa27e") + line("M12 1v14M6 5v8", "#777") + fill("M12 5l4-1v7l-4 1z", "#a58a7e"),
    replace: fill("M1 2l5-2 4 2v5l-4 2-5-2z", "#aaa27e") + fill("M7 8l4-2 4 2v5l-4 2-4-2z", "#c5cad2") + line("M2 9v4h4", "#888"),
    wrench: fill("M5 4l7-3 3 4-3 4-4 1-5 5-2-2 4-4z", "#9aa0a0") + fill("M2 9h5v5H2z", "#aaa27e"),
    brick: fill("M6 1h5l1 5 4 2v5l-6 1-2-3-4 4-4-3 6-5z", "#9c977c"),
    parts: fill("M1 1h7v5H1zM1 10h6v5H1zM9 9h6v6H9z", "#aaa27e"),
    steps: line("M1 11h4v4H1zM6 6h4v4H6zM11 1h4v4h-4zM5 13h3v-3M10 8h3V5", "#777", 1.5),
    cubes: line("M1 6l4-2 9 2v7l-6 2-7-2zM1 6l7 2v7M8 8l6-2", "#929292") + fill("M6 3l5-2 4 2v5l-5 2-4-2z", "#b0ab8c"),
    window: fill("M1 1h14v14H1z", "#a9aec0") + fill("M1 1h14v3H1z", "#7f86a4") + fill("M4 7l5-2 4 2v5l-5 2-4-2z", "#b5ae84"),
    links: `<circle cx="6" cy="5" r="3" fill="none" stroke="#999378" stroke-width="2"/><circle cx="9" cy="11" r="3" fill="none" stroke="#999378" stroke-width="2"/>`,
    diamond: fill("M1 4l7-4 7 4v8l-7 4-7-4z", "#a8a182") + fill("M3 8l5-4 5 4-5 4z", "#7c8498") + line("M7 6l3 2-3 2z", "#fff"),
    tree: line("M3 5v9h4M3 6h12M7 14h9", "#7070a0") + fill("M3 0h4v4H3zM0 4h5v4H0zM6 10h5v5H6z", "#e8d820") + line("M3 .5h4v4M.5 4.500H5V8", "#a89818"),
    tree2: line("M3 5v9h4M3 6h12M12 13h4", "#8080b0") + fill("M1 0h5v6H1z", "#d89898") + line("M7 10l5 5M12 10l-5 5M9.500 9v7", "#c66"),
    bolts: fill("M1 0h5v10h2v3l-3 3H3l-3-3v-3h1z", "#6c98e0") + fill("M9 1h6v14h-4l-2-3 3-2V6H9z", "#e8b838") + line("M9 1h6v14h-4", "#a87818"),
    signal: `<circle cx="5" cy="11" r="5" fill="#1470d0"/><text class="info-text" x="4" y="14" fill="#fff">i</text>` + line("M6 3q7 0 7 8M6 0q10 0 10 11", "#5f86c4", 1.5),
    web: fill("M2 0h9l4 4v12H2z", "#fce98c") + line("M2 .5h9l4 4v11H2z", "#998844") + `<circle cx="8" cy="8" r="4" fill="#3070d0"/>` + fill("M6 5l4 3-2 3-3-2z", "#40b058"),
    clock: `<circle cx="8" cy="8" r="7" fill="#f4f8fa" stroke="#708088" stroke-width="2"/>` + line("M8 3v5h4", "#333", 1.5),
    book: fill("M1 2l5 1v12l-5-1z", "#b8c8e0") + fill("M6 2h10v12H6z", "#fff") + line("M1 2l5 1 10-1v12l-10 1-5-1zM6 3v12", "#777") + line("M9 4v2", "#d44", 2) + line("M9 7v2", "#44d", 2) + line("M9 10v2", "#4a4", 2) + line("M11 5h3M11 8h3M11 11h3", "#48a", 1),
    rainbow: fill("M1 0h6v3H1z", "#f02020") + fill("M1 3h6v3H1z", "#f8d820") + fill("M1 6h6v4H1z", "#30c838") + fill("M1 10h6v6H1z", "#2070f0") + line("M9 6l6 9", "#3840a8", 2.5) + line("M12 0v7M9 4h7", "#e8d850"),
    wand: fill("M1 3h4v9H1z", "#5060b0") + line("M2 12l12-9M7 6l8 9", "#4048a0", 2.5) + line("M11 0v7M8 4h7", "#e8c820") + fill("M1 12h5v3H1z", "#d0b040"),
    people: `<circle cx="11" cy="4" r="3" fill="#f0b060"/>` + line("M8 4q1-4 6-2", "#a86018", 2) + fill("M8 12q0-5 4-5t4 5z", "#38983c") + `<circle cx="5" cy="8" r="3" fill="#e0906c"/>` + line("M2 9q0-5 6-3", "#703020", 2) + fill("M0 16q0-5 5-5t5 5z", "#8854b8"),
    scene: fill("M0 1h16v14H0z", "#244d94") + fill("M1 7h14v7H1z", "#c4dcf4") + fill("M1 14q3-6 6-3 4-5 8 1v2z", "#fff") + `<circle cx="11" cy="5" r="2" fill="#ffe858"/>`,
    gif: fill("M0 2.500h12v4H0z", "#fff") + line("M.5 3h11v3H.5z", "#000", .5) + fill("M3 3.500h8v2H3z", "#00d8d8") + fill("M0 6h16v9H0z", "#fff") + line("M.3 6v8.500h15.400V6", "#000", .5) + fill("M11 0h5v8h-5z", "#fff") + fill("M11 0h5v2h-5z", "#00c0c0") + line("M11.300.3h4.400v7h-4.400zM13.500 3.500H15M13.500 5.500H15M12 3.500h1M12 5.500h1", "#000", .5) + `<text class="gif-text" x="0" y="13">GGG</text>`
};

document.querySelectorAll("svg[data-icon]").forEach(svg => {
    svg.setAttribute("viewBox", "0 0 16 16");
    svg.innerHTML = icons[svg.dataset.icon];
});

// "|" separator, "v" drop arrow, "V" toolbar end arrow, "::" next toolbar, "*" pressed
document.querySelectorAll(".tools").forEach(bar => {
    bar.innerHTML = bar.dataset.items.split(" ").map(item => {
        if (item == "|") return '<span class="sep"></span>';
        if (item == "v") return '<span class="arrow"></span>';
        if (item == "V") return '<span class="arrow low"></span>';
        if (item == "::") return '<span class="group-end"></span><span class="grip"></span>';
        const name = item.replace("*", "");
        return `<button class="tool${item != name ? " pressed" : ""}" aria-label="${name}"><svg class="icon" viewBox="0 0 16 16">${icons[name]}</svg></button>`;
    }).join("");
});

// rack: twelve teeth and a half tooth at each end
const pitch = 102.7;
const first = 82.3;
let back = "", over = "", front = "";
for (let i = -1; i <= 12; i++) {
    const c = first + i * pitch;
    const tooth = (x, y) => `L${x - 51.35} ${y + 87}h4C${x - 44} ${y + 87} ${x - 42} ${y + 81} ${x - 40} ${y + 76}L${x - 12} ${y}H${x + 12}L${x + 40} ${y + 76}C${x + 42} ${y + 81} ${x + 44} ${y + 87} ${x + 48} ${y + 87}h4`;
    const outline = tooth(c, 600).replace("L", "M");
    const flank = `M${c - 12} 600V612L${c - 41} 689 ${c - 46} 695V686L${c - 40} 676Z`;
    back += `<path d="${outline}V712H${c - 51.35}Z" fill="#2fe42f"/><path d="M${c - 12} 600h24v12h-24z" fill="#35fb35"/><path d="${flank}" fill="#28bb28"/><path d="M${c + 40} 687h24v13h-24z" fill="url(#valley)"/><path d="${outline}" fill="none" stroke="#222"/>`;
    over += `<path d="${outline}V712H${c - 51.35}Z" fill="#9a7f1d" stroke="#d21c10"/><path d="${flank}" fill="#9a6218"/>`;
    front += tooth(c, 612);
}
document.getElementById("rack-back").innerHTML = back;
document.getElementById("rack-over").innerHTML = over;
const face = document.getElementById("rack-front");
face.setAttribute("d", "M-80 779" + front + "V779Z");
face.setAttribute("fill", "#36ff36");
face.setAttribute("stroke", "#222");
```
